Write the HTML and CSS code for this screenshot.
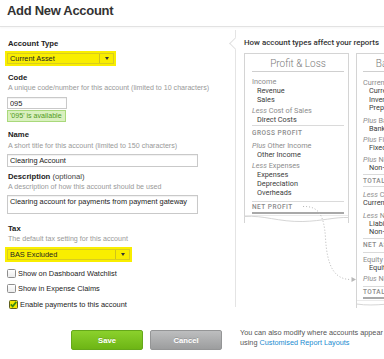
FILE: index.html
```html
<!DOCTYPE html>
<html lang="en">
<head>
<meta charset="utf-8">
<title>Add New Account</title>
<link rel="stylesheet" href="styles.css">
</head>
<body>
<header class="hdr"><h1 class="title">Add New Account</h1></header>
<main class="main">
  <div class="top">
    <form class="form">
      <div class="label first">Account Type</div>
      <div class="hl hl-type">
        <div class="combo"><span class="combo-text">Current Asset</span><span class="combo-btn"><span class="caret"></span></span></div>
      </div>

      <div class="label sp6">Code</div>
      <div class="help">A unique code/number for this account (limited to 10 characters)</div>
      <input class="field f-code" value="095">
      <div class="avail">'095' is available</div>

      <div class="label sp7">Name</div>
      <div class="help sp1">A short title for this account (limited to 150 characters)</div>
      <input class="field f-name" value="Clearing Account">

      <div class="label sp4">Description <span class="opt">(optional)</span></div>
      <div class="help">A description of how this account should be used</div>
      <textarea class="field f-desc">Clearing account for payments from payment gateway</textarea>

      <div class="label sp9">Tax</div>
      <div class="help">The default tax setting for this account</div>
      <div class="hl hl-tax">
        <div class="combo combo-tax"><span class="combo-text">BAS Excluded</span><span class="combo-btn"><span class="caret"></span></span></div>
      </div>

      <label class="chk c1"><span class="cb"></span><span>Show on Dashboard Watchlist</span></label>
      <label class="chk c2"><span class="cb"></span><span>Show in Expense Claims</span></label>
      <label class="chk c3 hl-chk"><span class="cb on"><svg viewBox="0 0 9 9" width="9" height="9"><path d="M1.8 4.4 L3.7 6.4 L7.3 1.9" fill="none" stroke="#3b8c12" stroke-width="1.7"/></svg></span><span>Enable payments to this account</span></label>
    </form>

    <aside class="panel">
      <div class="panel-title">How account types affect your reports</div>
      <div class="cards">
        <div class="card pl">
          <div class="card-title">Profit &amp; Loss</div>
          <div class="items">
            <div class="r h a5">Income</div>
            <div class="r s">Revenue</div>
            <div class="r s">Sales</div>
            <div class="r h a2"><i>Less</i> Cost of Sales</div>
            <div class="r s">Direct Costs</div>
            <div class="sep a1"></div>
            <div class="r cap a3">GROSS PROFIT</div>
            <div class="r h a3"><i>Plus</i> Other Income</div>
            <div class="r s">Other Income</div>
            <div class="r h a2"><i>Less</i> Expenses</div>
            <div class="r s">Expenses</div>
            <div class="r s">Depreciation</div>
            <div class="r s">Overheads</div>
            <div class="sep a4"></div>
            <div class="r cap a1 lh8">NET PROFIT</div>
            <div class="thick a1"></div>
          </div>
          <svg class="wave" viewBox="0 0 107 8" preserveAspectRatio="none"><path d="M0.5 0 V1.5 C 20 0, 35 7, 60 6.5 C 80 6, 92 2, 106.5 2.5 V0 Z" fill="#fff" stroke="#d4d4d4" stroke-width="1"/></svg>
        </div>

        <div class="card bs">
          <div class="card-title">Balance Sheet</div>
          <div class="items bsi">
            <div class="q h b7">Current Assets</div>
            <div class="q s">Current Asset</div>
            <div class="q s">Inventory</div>
            <div class="q s">Prepayment</div>
            <div class="q h b4"><i>Plus</i> Bank</div>
            <div class="q s">Bank</div>
            <div class="q h b25"><i>Plus</i> Fixed Assets</div>
            <div class="q s">Fixed Asset</div>
            <div class="q h b3"><i>Plus</i> Non-current Assets</div>
            <div class="q s">Non-current Asset</div>
            <div class="sep b15"></div>
            <div class="q cap b2">TOTAL ASSETS</div>
            <div class="sep b1"></div>
            <div class="q h b34"><i>Less</i> Current Liabilities</div>
            <div class="q d">Current Liability</div>
            <div class="q h b4"><i>Less</i> Non-current Liabilities</div>
            <div class="q s">Liability</div>
            <div class="q s">Non-current Liability</div>
            <div class="sep b1"></div>
            <div class="q cap b18">NET ASSETS</div>
            <div class="sep b28"></div>
            <div class="q h b28">Equity</div>
            <div class="q s">Equity</div>
            <div class="q h b24"><i>Plus</i> Net Profit</div>
            <div class="sep b26"></div>
            <div class="q cap b08">TOTAL EQUITY</div>
            <div class="thick b08"></div>
          </div>
          <svg class="wave" viewBox="0 0 102 8" preserveAspectRatio="none"><path d="M0.5 0 V4 C 20 7, 40 2, 60 3 C 80 4, 92 6, 101.5 5 V0 Z" fill="#fff" stroke="#d4d4d4" stroke-width="1"/></svg>
        </div>
      </div>
    </aside>
  </div>

  <div class="foot">
    <div class="actions">
      <button type="button" class="btn btn-save">Save</button>
      <button type="button" class="btn btn-cancel">Cancel</button>
    </div>
    <p class="note">You can also modify where accounts appear in your reports<br>using <a class="link" href="#">Customised Report Layouts</a></p>
  </div>
</main>

<svg class="flow" width="384" height="359" viewBox="0 0 384 359">
  <path d="M303 206.5 C 318 206, 324 214, 325.5 238 C 327 264, 333 279.5, 351 279.5" fill="none" stroke="#b8b8b8" stroke-width="1" stroke-dasharray="1 2"/>
  <polygon points="351.5,277 356,279.5 351.5,282" fill="#b8b8b8"/>
</svg>
</body>
</html>
```

FILE: styles.css
```css
html { overflow: hidden; }
body {
  margin: 0;
  position: relative;
  width: 384px;
  height: 359px;
  overflow: hidden;
  background: #fff;
  font-family: "Liberation Sans", Arial, sans-serif;
  color: #222;
}

/* header */
.hdr {
  height: 26px;
  border-bottom: 1px solid #e2e2e2;
  box-shadow: 0 1px 2px rgba(0, 0, 0, 0.04);
  padding-left: 7px;
}
.title {
  margin: 0;
  font-size: 13px;
  line-height: 22px;
  font-weight: bold;
  color: #333;
  letter-spacing: -0.3px;
}

/* layout */
.top { display: flex; align-items: flex-start; }
.form {
  width: 235px;
  flex-shrink: 0;
  box-sizing: border-box;
  padding: 11px 0 0 7px;
  margin: 0;
}

.label {
  font-size: 7.7px;
  line-height: 11px;
  font-weight: bold;
  color: #222;
  padding-left: 1px;
}
.opt { font-weight: normal; color: #444; }
.help {
  font-size: 7.1px;
  line-height: 11px;
  color: #999;
  white-space: nowrap;
  padding-left: 1px;
}
.sp1 { margin-top: 1px; }
.sp4 { margin-top: 4px; }
.sp6 { margin-top: 6px; }
.sp7 { margin-top: 7px; }
.sp9 { margin-top: 9px; }

/* yellow highlight */
.hl {
  background: #f9ee00;
  margin-left: -2px;
  padding: 2px;
  box-sizing: border-box;
}
.hl-type { margin-top: 2px; width: 111px; height: 15px; }
.hl-tax { margin-top: 2px; width: 127px; height: 15px; }

.combo {
  display: flex;
  height: 11px;
  box-sizing: border-box;
  border: 1px solid #d9cd1e;
  font-size: 7.4px;
  line-height: 9px;
  color: #222;
}
.combo-text { flex: 1; padding-left: 2px; }
.combo-btn {
  width: 13px;
  border-left: 1px solid #cfc31a;
  display: flex;
  align-items: center;
  justify-content: center;
}
.caret {
  width: 0;
  height: 0;
  border-left: 2.5px solid transparent;
  border-right: 2.5px solid transparent;
  border-top: 3px solid #333;
}

/* inputs */
.field {
  display: block;
  box-sizing: border-box;
  margin: 0;
  border: 1px solid #c9c9c9;
  box-shadow: inset 0 1px 1px rgba(0, 0, 0, 0.06);
  font-family: "Liberation Sans", Arial, sans-serif;
  font-size: 7.4px;
  color: #222;
  padding: 0 2px;
  background: #fff;
  outline: none;
}
.f-code { margin-top: 3px; width: 60px; height: 12px; }
.f-name { margin-top: 2px; width: 191px; height: 13px; }
.f-desc {
  margin-top: 2px;
  width: 191px;
  height: 19px;
  resize: none;
  overflow: hidden;
  line-height: 9px;
  padding-top: 1px;
}

.avail {
  margin-top: 1px;
  width: 59px;
  height: 12px;
  box-sizing: border-box;
  background: #d9f0bf;
  border: 1px solid #a9d97b;
  color: #4f9a1c;
  font-size: 7.1px;
  line-height: 10px;
  padding-left: 2px;
  white-space: nowrap;
}

/* checkboxes */
.chk {
  display: flex;
  align-items: center;
  gap: 2px;
  height: 10px;
  font-size: 7.4px;
  color: #222;
  white-space: nowrap;
}
.c1 { margin-top: 6px; }
.c2 { margin-top: 5px; }
.c3 { margin-top: 4px; }
.hl-chk {
  height: 14px;
  width: 123px;
  padding: 0 0 0 2px;
}
.cb {
  width: 9px;
  height: 9px;
  box-sizing: border-box;
  border: 1px solid #8e8e8e;
  border-radius: 1.5px;
  background: linear-gradient(#fff, #ececec);
  flex-shrink: 0;
  position: relative;
}
.cb.on { border-color: #5e5e1e; background: #f3e800; }
.cb.on svg { position: absolute; left: -1px; top: -1px; }

/* right panel */
.panel {
  position: relative;
  margin-top: 3px;
  height: 277px;
  flex: 1;
  min-width: 0;
  border-left: 1px solid #e4e4e4;
  padding: 7px 0 0 8px;
  box-sizing: border-box;
}
.panel::before {
  content: "";
  position: absolute;
  left: -5px;
  top: 9px;
  width: 9px;
  height: 9px;
  box-sizing: border-box;
  background: #fff;
  border-left: 1px solid #e0e0e0;
  border-bottom: 1px solid #e0e0e0;
  transform: rotate(45deg);
}
.panel-title {
  font-family: Roboto, "Liberation Sans", sans-serif;
  font-weight: 500;
  font-size: 7.9px;
  line-height: 11px;
  color: #333;
  white-space: nowrap;
}
.cards {
  display: flex;
  gap: 7px;
  margin-top: 5px;
  align-items: flex-start;
}
.card {
  flex-shrink: 0;
  box-sizing: border-box;
  border: 1px solid #d4d4d4;
  border-bottom: none;
  background: #fff;
  font-family: Roboto, "Liberation Sans", sans-serif;
  white-space: nowrap;
}
.pl { width: 105px; }
.bs { width: 100px; }
.card-title {
  margin: 0 4px 0 7px;
  padding-top: 2px;
  line-height: 15px;
  font-size: 10px;
  font-weight: 300;
  color: #7a7a7a;
  text-align: center;
  border-bottom: 1px solid #cfcfcf;
}
.bs .card-title { margin-left: 6px; }
.items { padding: 0 4px 0 7px; }
.bsi { padding-left: 6px; }
.r { font-size: 7.3px; line-height: 9px; }
.q { font-size: 7.3px; line-height: 8.4px; }
.h { color: #8d8d8d; }
.s { color: #3c3c3c; padding-left: 5px; }
.bs .s { padding-left: 6px; }
.d { color: #3c3c3c; }
.cap {
  font-size: 6.5px;
  letter-spacing: 0.5px;
  font-weight: 500;
  color: #8a8a8a;
}
.lh8 { line-height: 8px; }
.sep { border-top: 1px solid #dadada; }
.thick { border-top: 2px solid #a9a9a9; }
.wave {
  display: block;
  width: calc(100% + 2px);
  height: 8px;
  margin: 1px -1px 0;
}

.a1 { margin-top: 1px; }
.a2 { margin-top: 2px; }
.a3 { margin-top: 3px; }
.a4 { margin-top: 4px; }
.a5 { margin-top: 5px; }
.b08 { margin-top: 0.8px; }
.b1 { margin-top: 1px; }
.b15 { margin-top: 1.5px; }
.b18 { margin-top: 1.8px; }
.b2 { margin-top: 2px; }
.b24 { margin-top: 2.4px; }
.b25 { margin-top: 2.5px; }
.b26 { margin-top: 2.6px; }
.b28 { margin-top: 2.8px; }
.b3 { margin-top: 3px; }
.b34 { margin-top: 3.4px; }
.b4 { margin-top: 4px; }
.b7 { margin-top: 7px; }

/* footer */
.foot {
  display: flex;
  align-items: flex-start;
  margin-top: 19px;
}
.actions {
  width: 235px;
  flex-shrink: 0;
  box-sizing: border-box;
  padding-left: 71px;
  display: flex;
  gap: 7px;
}
.btn {
  width: 72px;
  height: 20px;
  box-sizing: border-box;
  border-radius: 2px;
  font-family: "Liberation Sans", Arial, sans-serif;
  font-size: 7.7px;
  font-weight: bold;
  color: #fff;
  padding: 0;
  text-shadow: 0 -1px 0 rgba(0, 0, 0, 0.15);
}
.btn-save {
  background: linear-gradient(#8bd12c, #6db515);
  border: 1px solid #65a81a;
}
.btn-cancel {
  background: linear-gradient(#bdbebf, #9c9d9e);
  border: 1px solid #949596;
}
.note {
  margin: -2px 0 0 5px;
  font-size: 7.3px;
  line-height: 10px;
  color: #555;
  white-space: nowrap;
}
.link { color: #1a8bd0; text-decoration: none; }

/* connector */
.flow {
  position: absolute;
  left: 0;
  top: 0;
  pointer-events: none;
}
```
